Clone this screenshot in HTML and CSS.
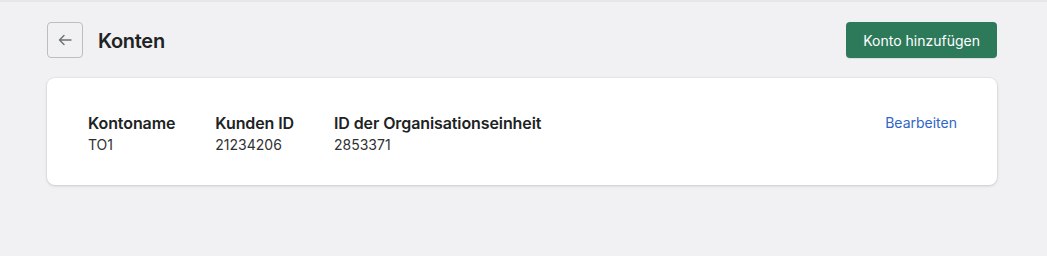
FILE: index.html
```html
<!doctype html>
<html lang="de">
  <head>
    <meta charset="UTF-8" />
    <title>Konten</title>
    <link rel="stylesheet" href="styles.css">
  </head>
  <body>
    <div class="page">
      <div class="page-header">
        <div class="title-group">
          <button class="back-btn" aria-label="Zurück">
            <svg width="16" height="16" viewBox="0 0 16 16" fill="none">
              <path d="M14 8H2.5M7 3.5L2.5 8 7 12.5" stroke="#6d7175" stroke-width="1.4" stroke-linecap="round" stroke-linejoin="round"/>
            </svg>
          </button>
          <h1>Konten</h1>
        </div>
        <button class="primary-btn">Konto hinzufügen</button>
      </div>

      <div class="card">
        <div class="account-row">
          <div class="fields">
            <div class="field">
              <div class="field-label">Kontoname</div>
              <div class="field-value">TO1</div>
            </div>
            <div class="field">
              <div class="field-label">Kunden ID</div>
              <div class="field-value">21234206</div>
            </div>
            <div class="field">
              <div class="field-label">ID der Organisationseinheit</div>
              <div class="field-value">2853371</div>
            </div>
          </div>
          <a href="#" class="edit-link">Bearbeiten</a>
        </div>
      </div>
    </div>
  </body>
</html>
```

FILE: styles.css
```css
body {
  margin: 0;
  font-family: "Inter", "Noto Sans", sans-serif;
  background: #f1f1f3;
  color: #202223;
  border-top: 2px solid #e6e7e9;
  min-height: 100vh;
  box-sizing: border-box;
}

.page {
  max-width: 950px;
  margin: 0 50px 0 47px;
  padding-top: 20px;
}

.page-header {
  display: flex;
  align-items: center;
  justify-content: space-between;
  height: 36px;
}

.title-group {
  display: flex;
  align-items: center;
  gap: 15px;
}

.back-btn {
  width: 36px;
  height: 36px;
  border: 1px solid #babfc4;
  border-radius: 4px;
  background: transparent;
  display: flex;
  align-items: center;
  justify-content: center;
  padding: 0;
  cursor: pointer;
}

h1 {
  margin: 0;
  font-size: 20px;
  font-weight: 600;
  letter-spacing: -0.3px;
  color: #202223;
  position: relative;
  top: 1px;
}

.primary-btn {
  height: 36px;
  padding: 0 17px;
  border: none;
  border-radius: 4px;
  background: #2d7a5b;
  color: #fff;
  font-family: inherit;
  font-size: 14px;
  font-weight: 400;
  cursor: pointer;
  box-shadow: 0 1px 0 rgba(0, 0, 0, 0.08);
}

.card {
  margin-top: 20px;
  background: #fff;
  border-radius: 8px;
  box-shadow: 0 0 0 1px rgba(63, 63, 68, 0.04), 0 1px 3px rgba(63, 63, 68, 0.18);
  padding: 33px 40px 30px 41px;
}

.account-row {
  display: flex;
  justify-content: space-between;
  align-items: flex-start;
}

.fields {
  display: flex;
  gap: 40px;
}

.field-label {
  font-size: 16px;
  font-weight: 600;
  line-height: 24px;
  letter-spacing: -0.1px;
}

.field-value {
  font-size: 14px;
  line-height: 20px;
  color: #303133;
}

.edit-link {
  color: #2f66c7;
  font-size: 14px;
  line-height: 24px;
  text-decoration: none;
}
```
